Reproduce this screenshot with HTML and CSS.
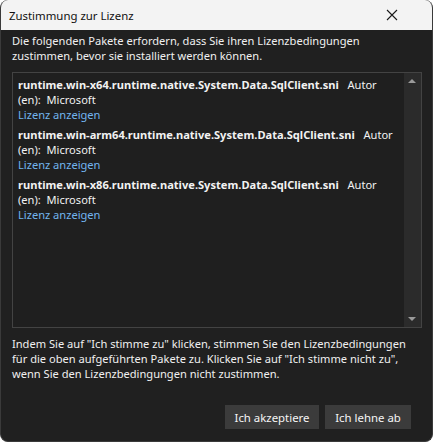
FILE: index.html
```html
<!DOCTYPE html>
<html lang="de">
<head>
<meta charset="utf-8">
<title>Zustimmung zur Lizenz</title>
<link rel="stylesheet" href="styles.css">
</head>
<body>
<div class="window">
  <div class="titlebar">
    <span class="title">Zustimmung zur Lizenz</span>
    <svg class="close" width="12" height="12" viewBox="0 0 12 12"><path d="M1 1 L11 11 M11 1 L1 11" stroke="#1a1a1a" stroke-width="1.1" fill="none"/></svg>
  </div>
  <div class="content">
    <p class="intro">Die folgenden Pakete erfordern, dass Sie ihren Lizenzbedingungen zustimmen, bevor sie installiert werden können.</p>
    <div class="listbox">
      <div class="items">
        <div class="item">
          <div class="line"><b>runtime.win-x64.runtime.native.System.Data.SqlClient.sni</b>&nbsp;&nbsp; Autor</div>
          <div class="line">(en):&nbsp; Microsoft</div>
          <div class="line link">Lizenz anzeigen</div>
        </div>
        <div class="item">
          <div class="line"><b>runtime.win-arm64.runtime.native.System.Data.SqlClient.sni</b>&nbsp;&nbsp; Autor</div>
          <div class="line">(en):&nbsp; Microsoft</div>
          <div class="line link">Lizenz anzeigen</div>
        </div>
        <div class="item">
          <div class="line"><b>runtime.win-x86.runtime.native.System.Data.SqlClient.sni</b>&nbsp;&nbsp; Autor</div>
          <div class="line">(en):&nbsp; Microsoft</div>
          <div class="line link">Lizenz anzeigen</div>
        </div>
      </div>
      <div class="scrollbar">
        <div class="arrow up"></div>
        <div class="track"></div>
        <div class="arrow down"></div>
      </div>
    </div>
    <p class="notice"><span class="line">Indem Sie auf "Ich stimme zu" klicken, stimmen Sie den Lizenzbedingungen</span><span class="line">für die oben aufgeführten Pakete zu. Klicken Sie auf "Ich stimme nicht zu",</span><span class="line">wenn Sie den Lizenzbedingungen nicht zustimmen.</span></p>
    <div class="buttons">
      <button class="btn accept">Ich akzeptiere</button>
      <button class="btn decline">Ich lehne ab</button>
    </div>
  </div>
</div>
</body>
</html>
```

FILE: styles.css
```css
* { box-sizing: border-box; }
html, body { margin: 0; padding: 0; background: #ffffff; }
body { width: 433px; height: 442px; overflow: hidden; font-family: "Noto Sans", "Open Sans", sans-serif; font-size: 11.1px; }

.window {
  width: 433px;
  height: 442px;
  background: #202020;
  border-radius: 8px;
  overflow: hidden;
  display: flex;
  flex-direction: column;
  border: 1px solid #3a3a3a;
  border-top: none;
}

.titlebar {
  height: 30px;
  flex: none;
  background: #f3f3f3;
  display: flex;
  align-items: center;
  justify-content: space-between;
  padding: 0 34px 0 8px;
}
.title { color: #111; font-size: 11.4px; }
.close { display: block; }

.content {
  flex: 1;
  display: flex;
  flex-direction: column;
  padding: 3px 10px 12px 11px;
  color: #f0f0f0;
}

p { margin: 0; line-height: 15px; }
.intro { height: 30px; padding-right: 40px; }
.line { display: block; white-space: nowrap; }

.listbox {
  margin-top: 9px;
  height: 256px;
  border: 1px solid #434343;
  background: #1f1f1f;
  display: flex;
}
.items { flex: 1; padding: 4px 5px; overflow: hidden; }
.item { line-height: 15px; margin-bottom: 5px; color: #f2f2f2; }
.item b { font-weight: 700; }
.link { color: #72b4ee; }

.scrollbar {
  width: 17px;
  flex: none;
  background: #2b2b2b;
  display: flex;
  flex-direction: column;
}
.track { flex: 1; }
.arrow { height: 17px; position: relative; }
.arrow::after {
  content: "";
  position: absolute;
  left: 4px;
  width: 0; height: 0;
  border-left: 4.5px solid transparent;
  border-right: 4.5px solid transparent;
}
.arrow.up::after { top: 6px; border-bottom: 4px solid #9a9a9a; }
.arrow.down::after { top: 7px; border-top: 4px solid #9a9a9a; }

.notice { margin-top: 8px; }

.buttons {
  margin-top: auto;
  display: flex;
  justify-content: flex-end;
  gap: 6px;
  padding-right: 11px;
}
.btn {
  height: 24px;
  border: none;
  background: #3b3b3b;
  color: #f5f5f5;
  font-family: inherit;
  font-size: 11.4px;
  padding: 0;
}
.accept { width: 94px; }
.decline { width: 86px; }
```
